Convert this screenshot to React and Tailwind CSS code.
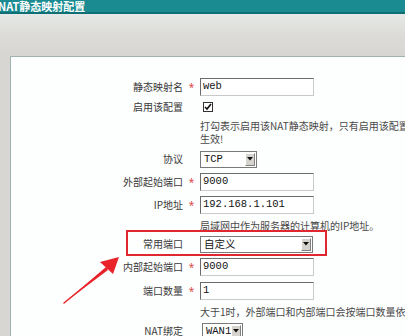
import React from 'react'

const cjk = { fontFamily: '"Noto Sans CJK SC", "Noto Sans", sans-serif' }
const mono = { fontFamily: '"Liberation Mono", "DejaVu Sans Mono", monospace' }

function Label({ text, req }) {
  return (
    <>
      <div className="w-[172px] shrink-0 text-right text-[10px] text-[#3a3a3a] leading-none" style={cjk}>{text}</div>
      <div className="w-[17px] shrink-0 text-center text-[10px] text-[#e0484a] leading-none">{req ? '*' : ''}</div>
    </>
  )
}

function TextBox({ value, w = 'w-[114px]' }) {
  return (
    <div className={`${w} h-[18px] bg-white border border-t-[#6b6b6b] border-l-[#6b6b6b] border-r-[#c9c9c9] border-b-[#c9c9c9] flex items-center pl-[2px] text-[10.5px] text-[#111]`} style={mono}>
      {value}
    </div>
  )
}

function Select({ value, w, font }) {
  return (
    <div className={`${w} h-[17px] bg-white border border-[#7a7a7a] flex items-center justify-between pl-[3px] pr-[1px]`}>
      <span className="text-[10.5px] text-[#111] leading-none" style={font}>{value}</span>
      <span className="w-[10px] h-[13px] bg-[#d6d3ce] border border-t-white border-l-white border-r-[#808080] border-b-[#808080] flex items-center justify-center">
        <svg width="6" height="4" viewBox="0 0 6 4"><path d="M0 0h6L3 3.5z" fill="#111" /></svg>
      </span>
    </div>
  )
}

function Row({ h, children, className = '' }) {
  return <div className={`flex items-center ${h} ${className}`}>{children}</div>
}

function Hint({ lines, className = '' }) {
  return (
    <div className={`pl-[189px] text-[10px] leading-[13px] text-[#4a4a4a] whitespace-nowrap ${className}`} style={cjk}>
      {lines.map((l, i) => <div key={i}>{l}</div>)}
    </div>
  )
}

export default function App() {
  return (
    <div className="w-[405px] h-[336px] overflow-hidden bg-[#d8d6d2] relative">
      {/* title bar */}
      <div className="h-[14px] bg-[#198b91] border-b-2 border-[#0e6f74] flex items-center">
        <span className="text-[11px] font-bold text-white leading-none whitespace-nowrap -ml-[2px]" style={cjk}>NAT静态映射配置</span>
      </div>
      <div className="h-[42px] bg-gradient-to-b from-[#e6e9e7] via-[#dcdbd7] to-[#d8d6d2]" />

      {/* panel */}
      <div className="ml-[10px] h-[300px] bg-[#fdfefe] border-l border-t border-[#9fb2b0] relative pt-[20px]">
        <Row h="h-[20px]">
          <Label text="静态映射名" req />
          <TextBox value="web" />
        </Row>
        <Row h="h-[20px]">
          <Label text="启用该配置" />
          <div className="ml-[3px] w-[10px] h-[10px] border border-[#333] bg-white flex items-center justify-center">
            <svg width="8" height="8" viewBox="0 0 8 8"><path d="M1 4l2 2 4-5" stroke="#111" strokeWidth="1.6" fill="none" /></svg>
          </div>
        </Row>
        <Hint className="h-[31px] pt-[2px]" lines={['打勾表示启用该NAT静态映射，只有启用该配置', '生效!']} />
        <Row h="h-[22px]">
          <Label text="协议" />
          <Select value="TCP" w="w-[57px]" font={mono} />
        </Row>
        <Row h="h-[23px]">
          <Label text="外部起始端口" req />
          <TextBox value="9000" />
        </Row>
        <Row h="h-[24px]">
          <Label text="IP地址" req />
          <TextBox value="192.168.1.101" />
        </Row>
        <Hint className="h-[17px] pt-[2px]" lines={['局域网中作为服务器的计算机的IP地址。']} />
        <Row h="h-[20px]" className="relative">
          <Label text="常用端口" />
          <Select value="自定义" w="w-[113px]" font={cjk} />
          <div className="absolute left-[115px] top-[-4px] w-[201px] h-[26px] border-2 border-[#e0262e]" />
        </Row>
        <Row h="h-[26px]">
          <Label text="内部起始端口" req />
          <TextBox value="9000" />
        </Row>
        <Row h="h-[22px]">
          <Label text="端口数量" req />
          <TextBox value="1" />
        </Row>
        <Hint className="h-[18px] pt-[3px]" lines={['大于1时，外部端口和内部端口会按端口数量依']} />
        <Row h="h-[22px]">
          <Label text="NAT绑定" />
          <div className="ml-[2px]">
            <Select value="WAN1" w="w-[41px]" font={mono} />
          </div>
        </Row>

        {/* annotation arrow */}
        <svg className="absolute left-[50px] top-[196px]" width="62" height="54" viewBox="0 0 62 54">
          <path d="M3 50 L45 14 L47 17 Z" fill="#e8232a" />
          <path d="M3 50 L46 15" stroke="#e8232a" strokeWidth="1.5" strokeLinecap="round" />
          <path d="M58 4 L39 9 L52 21 Z" fill="#e8232a" />
        </svg>
      </div>
    </div>
  )
}
